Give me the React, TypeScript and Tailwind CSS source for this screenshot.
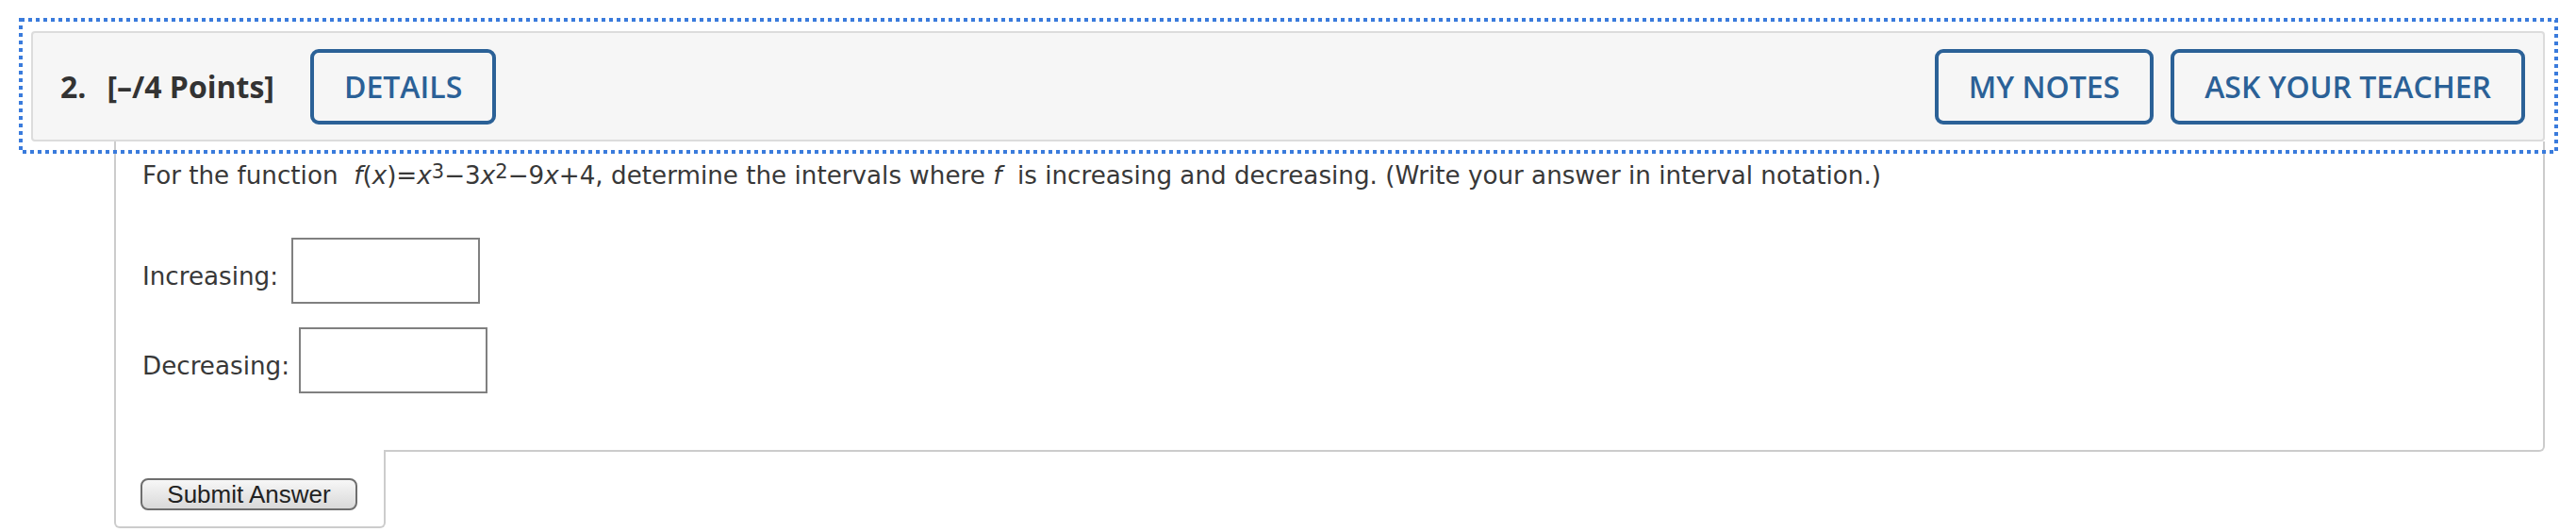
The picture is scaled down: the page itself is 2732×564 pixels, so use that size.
import React from "react";

const blueBtn =
  "h-[80px] rounded-[9px] border-4 border-[#2b6197] bg-[#f6f6f6] px-[32px] text-[32px] font-semibold leading-none text-[#2b6197] font-['Open_Sans',sans-serif]";

function FocusRing() {
  return (
    <svg
      className="pointer-events-none absolute -top-[14px] -left-[13px] h-[calc(100%+27px)] w-[calc(100%+27px)]"
      aria-hidden
    >
      <rect
        x="2"
        y="2"
        fill="none"
        stroke="#3a7bdc"
        strokeWidth="4"
        strokeDasharray="4 4"
        style={{ width: "calc(100% - 4px)", height: "calc(100% - 4px)" }}
      />
    </svg>
  );
}

function Header() {
  return (
    <div className="relative mx-[33px] mt-[33px]">
      <div className="flex h-[117px] items-center rounded-[4px] border-2 border-[#dcdcdc] bg-[#f6f6f6] pl-[29px] pr-[19px] font-['Open_Sans',sans-serif]">
        <span className="text-[32px] font-bold text-[#333]">2.</span>
        <span className="ml-[22px] text-[32px] font-bold text-[#333]">[–/4 Points]</span>
        <button className={`${blueBtn} ml-[38px]`}>DETAILS</button>
        <div className="ml-auto flex gap-[18px]">
          <button className={blueBtn}>MY NOTES</button>
          <button className={blueBtn}>ASK YOUR TEACHER</button>
        </div>
      </div>
      <FocusRing />
    </div>
  );
}

function AnswerRow({ label, gap }: { label: string; gap: string }) {
  return (
    <div className={`flex items-center ${gap}`}>
      <span className="mt-[11px] leading-[30px]">{label}</span>
      <input
        type="text"
        className="h-[70px] w-[200px] border-2 border-[#808080] bg-white outline-none"
      />
    </div>
  );
}

function Question() {
  return (
    <div className="ml-[121px] mr-[33px] font-['DejaVu_Sans',Verdana,sans-serif] text-[26.2px] text-[#383838]">
      <div className="rounded-br-[6px] border-x-2 border-b-2 border-[#cccccc] pb-[60px] pl-[28px] pt-[21px]">
        <p className="leading-[30px]">
          For the function&nbsp;{" "}
          <i>f</i>(<i>x</i>)=<i>x</i>
          <sup className="-top-[6px] text-[21px]">3</sup>−3<i>x</i>
          <sup className="-top-[6px] text-[21px]">2</sup>−9<i>x</i>+4, determine the intervals where <i>f</i>
          &nbsp; is increasing and decreasing. (Write your answer in interval notation.)
        </p>
        <div className="mt-[51px] flex flex-col gap-[25px]">
          <AnswerRow label="Increasing:" gap="gap-[14px]" />
          <AnswerRow label="Decreasing:" gap="gap-[10px]" />
        </div>
      </div>
      <div className="-mt-[2px] h-[83px] w-[288px] rounded-b-[6px] border-x-2 border-b-2 border-[#cccccc] bg-white pl-[26px] pt-[28px]">
        <button className="h-[34px] w-[230px] rounded-[8px] border-2 border-[#6e6e6e] bg-gradient-to-b from-[#f7f7f7] to-[#d9d9d9] font-['Liberation_Sans',Arial,sans-serif] text-[26px] leading-none text-[#222]">
          Submit Answer
        </button>
      </div>
    </div>
  );
}

export default function App() {
  return (
    <div className="h-[564px] w-[2732px] overflow-hidden bg-white">
      <Header />
      <Question />
    </div>
  );
}
